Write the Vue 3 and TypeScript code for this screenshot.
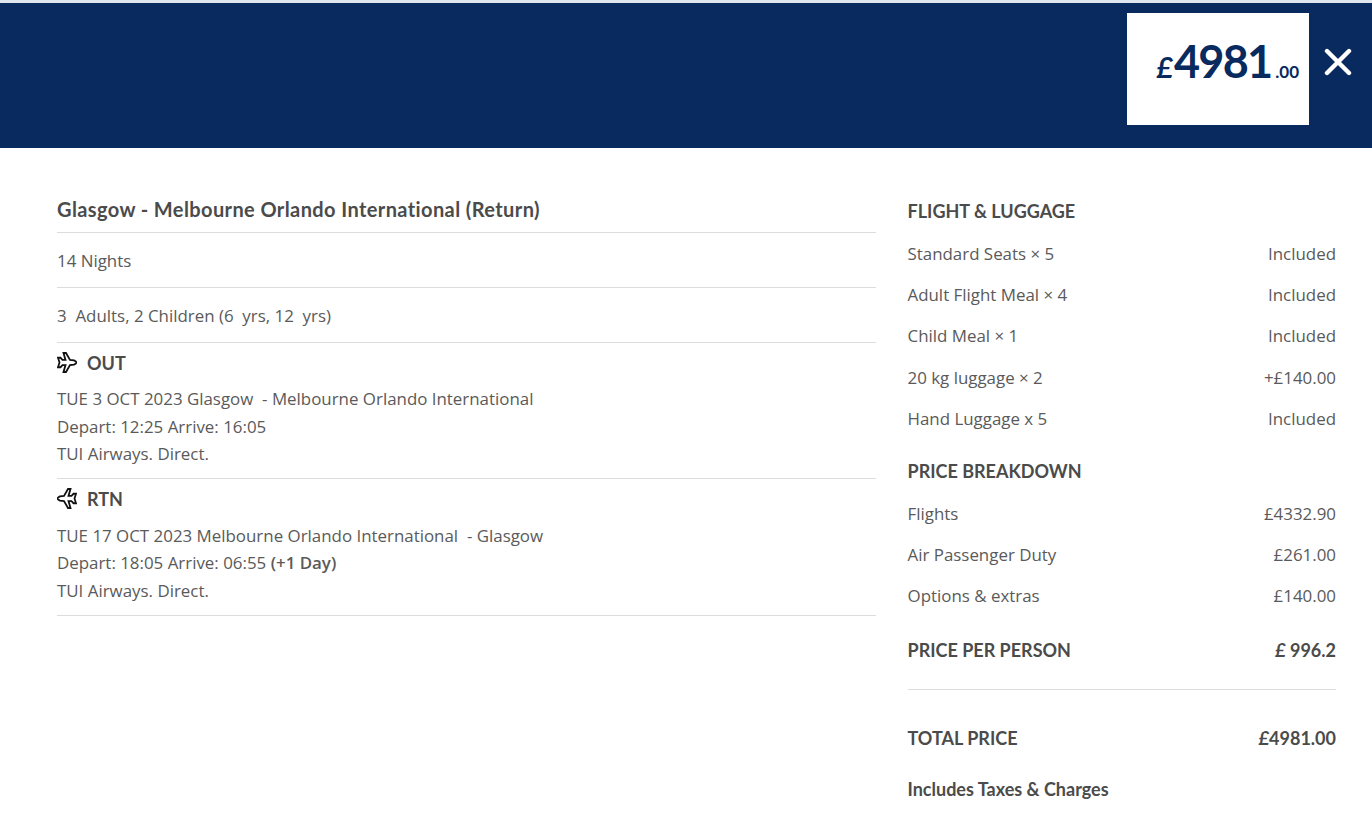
<script setup lang="ts">
interface Row { label: string; value: string }
const luggage: Row[] = [
  { label: 'Standard Seats × 5', value: 'Included' },
  { label: 'Adult Flight Meal × 4', value: 'Included' },
  { label: 'Child Meal × 1', value: 'Included' },
  { label: '20 kg luggage × 2', value: '+£140.00' },
  { label: 'Hand Luggage x 5', value: 'Included' },
]
const breakdown: Row[] = [
  { label: 'Flights', value: '£4332.90' },
  { label: 'Air Passenger Duty', value: '£261.00' },
  { label: 'Options & extras', value: '£140.00' },
]
</script>

<template>
  <div class="page">
    <header class="banner">
      <div class="price">
        <span class="cur">£</span><span class="big">4981</span><span class="dec">.00</span>
      </div>
      <svg class="close" width="28" height="28" viewBox="0 0 28 28">
        <path d="M3 3 L25 25 M25 3 L3 25" stroke="#fff" stroke-width="4.4" stroke-linecap="round" />
      </svg>
    </header>
    <main class="content">
      <section class="left">
        <h2 class="title">Glasgow - Melbourne Orlando International (Return)</h2>
        <div class="single">14 Nights</div>
        <div class="single">3&nbsp; Adults, 2 Children (6&nbsp; yrs, 12&nbsp; yrs)</div>
        <div class="leg out">
          <div class="leg-head">
            <svg width="20" height="21" viewBox="0 0 20 20" preserveAspectRatio="none">
              <path d="M1 5.5 L3.5 5.5 L5.5 7.5 L8.5 7.5 L6.5 1 L9 1 L13 7.5 L17 8 Q19.5 9.3 19.5 10 Q19.5 10.7 17 12 L13 12.5 L9 19 L6.5 19 L8.5 12.5 L5.5 12.5 L3.5 14.5 L1 14.5 L2.5 10 Z" fill="none" stroke="#111" stroke-width="1.8" stroke-linejoin="miter" />
            </svg>
            <span>OUT</span>
          </div>
          <p>TUE 3 OCT 2023 Glasgow&nbsp; - Melbourne Orlando International</p>
          <p>Depart: 12:25 Arrive: 16:05</p>
          <p>TUI Airways. Direct.</p>
        </div>
        <div class="leg rtn">
          <div class="leg-head">
            <svg width="20" height="21" viewBox="0 0 20 20" preserveAspectRatio="none">
              <path d="M19 5.5 L16.5 5.5 L14.5 7.5 L11.5 7.5 L13.5 1 L11 1 L7 7.5 L3 8 Q0.5 9.3 0.5 10 Q0.5 10.7 3 12 L7 12.5 L11 19 L13.5 19 L11.5 12.5 L14.5 12.5 L16.5 14.5 L19 14.5 L17.5 10 Z" fill="none" stroke="#111" stroke-width="1.8" stroke-linejoin="miter" />
            </svg>
            <span>RTN</span>
          </div>
          <p>TUE 17 OCT 2023 Melbourne Orlando International&nbsp; - Glasgow</p>
          <p>Depart: 18:05 Arrive: 06:55 <strong>(+1 Day)</strong></p>
          <p>TUI Airways. Direct.</p>
        </div>
      </section>
      <aside class="right">
        <h3 class="heading">FLIGHT &amp; LUGGAGE</h3>
        <div v-for="r in luggage" :key="r.label" class="row"><span>{{ r.label }}</span><span>{{ r.value }}</span></div>
        <h3 class="heading second">PRICE BREAKDOWN</h3>
        <div v-for="r in breakdown" :key="r.label" class="row"><span>{{ r.label }}</span><span>{{ r.value }}</span></div>
        <div class="row strong per"><span>PRICE PER PERSON</span><span><i>£</i> 996.2</span></div>
        <div class="row strong total"><span>TOTAL PRICE</span><span><i>£</i>4981.00</span></div>
        <div class="taxes">Includes Taxes &amp; Charges</div>
      </aside>
    </main>
  </div>
</template>

<style>
html, body { margin: 0; background: #fff; }
</style>

<style scoped>
.page {
  font-family: "Open Sans", "Lato", sans-serif;
  color: #5a5a5a;
  font-size: 16.9px;
  height: 817px;
  overflow: hidden;
  border-top: 3px solid #dfe6ee;
  box-sizing: border-box;
}
.banner {
  height: 145px;
  background: #092a5e;
  display: flex;
  justify-content: flex-end;
  align-items: flex-start;
  padding-top: 10px;
  box-sizing: border-box;
}
.price {
  width: 182px;
  height: 112px;
  background: #fff;
  color: #092a5e;
  box-sizing: border-box;
  display: flex;
  justify-content: flex-end;
  align-items: baseline;
  padding: 20px 10px 0 0;
  font-family: "Lato", sans-serif;
  font-weight: 700;
  line-height: 56px;
}
.cur { font-size: 28px; font-style: italic; margin-right: 1px; }
.big { font-size: 45px; letter-spacing: -1.8px; }
.dec { font-size: 17px; margin-left: 4px; }
.close { margin: 35px 20px 0 15px; }
.content {
  display: flex;
  padding: 0 36px 0 57px;
  gap: 31.5px;
}
.left { width: 819px; padding-top: 47px; }
.right { flex: 1; padding-top: 49px; }
.title {
  margin: 0;
  font-family: "Lato", sans-serif;
  font-size: 20px;
  font-weight: 700;
  letter-spacing: 0.4px;
  line-height: 28px;
  padding-bottom: 9px;
  color: #4b4b4b;
  border-bottom: 1px solid #dcdcdc;
}
.single {
  height: 54px;
  line-height: 56px;
  border-bottom: 1px solid #dcdcdc;
}
.leg { border-bottom: 1px solid #dcdcdc; }
.leg.out { padding-bottom: 10.5px; }
.leg.rtn { padding-bottom: 11px; }
.leg-head {
  display: flex;
  align-items: center;
  gap: 10px;
  height: 42px;
  padding-bottom: 3px;
  box-sizing: border-box;
  font-family: "Lato", sans-serif;
  font-weight: 700;
  font-size: 18px;
  color: #4b4b4b;
}
.rtn .leg-head { height: 42.5px; padding-bottom: 3.5px; }
.leg p { margin: 0; line-height: 27.5px; }
.leg strong { font-weight: 600; }
.heading {
  margin: 0;
  font-family: "Lato", sans-serif;
  font-size: 18px;
  font-weight: 700;
  line-height: 28px;
  padding-bottom: 9px;
  color: #4b4b4b;
}
.heading.second { padding-top: 17px; }
.row {
  display: flex;
  justify-content: space-between;
  line-height: 39px;
  height: 41.2px;
}
.row i { font-style: italic; }
.row.strong {
  font-family: "Lato", sans-serif;
  font-weight: 700;
  font-size: 18px;
  line-height: 41px;
  color: #4b4b4b;
  height: 41px;
}
.row.per { margin-top: 12px; height: 60px; padding-bottom: 19px; box-sizing: border-box; border-bottom: 1px solid #dcdcdc; }
.row.total { margin-top: 28px; }
.taxes {
  font-family: "Lato", sans-serif;
  font-weight: 700;
  font-size: 18px;
  margin-top: 15px;
  line-height: 30px;
  color: #4b4b4b;
}
</style>
